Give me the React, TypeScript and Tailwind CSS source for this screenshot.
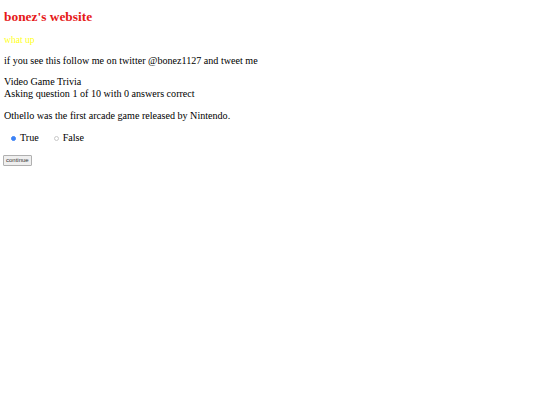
export default function App() {
  return (
    <div className="min-h-[405px] bg-white px-[4px] pt-[1px] text-[10.1px] leading-[12px] text-black" style={{ fontFamily: '"Liberation Serif", serif' }}>
      <h1 className="mt-[8px] text-[13.4px] font-bold leading-[15px] text-[#e61919]">bonez's website</h1>
      <p className="mt-[10px] text-[9.6px] leading-[11px] text-[#ffff22]">what up</p>
      <p className="mt-[10px]">if you see this follow me on twitter @bonez1127 and tweet me</p>
      <div className="mt-[9px]">
        <div>Video Game Trivia</div>
        <div>Asking question 1 of 10 with 0 answers correct</div>
      </div>
      <p className="mt-[10px]">Othello was the first arcade game released by Nintendo.</p>
      <div className="mt-[10px] flex items-center pl-[7px]">
        <label className="flex items-center">
          <input type="radio" name="answer" defaultChecked className="m-0 mr-[4px] h-[5px] w-[5px] appearance-none rounded-full border border-[#c8c8c8] checked:border-[#3b82f6] checked:bg-[#3b82f6]" />
          <span>True</span>
        </label>
        <label className="ml-[15px] flex items-center">
          <input type="radio" name="answer" className="m-0 mr-[4px] h-[5px] w-[5px] appearance-none rounded-full border border-[#c8c8c8] checked:border-[#3b82f6] checked:bg-[#3b82f6]" />
          <span>False</span>
        </label>
      </div>
      <button className="-ml-[1px] mt-[11px] block rounded-[1px] border border-[#b0b0b0] bg-[#efefef] px-[2px] py-[1px] text-[6px] leading-[7px] text-[#333]" style={{ fontFamily: '"Liberation Sans", sans-serif' }}>
        continue
      </button>
    </div>
  );
}
